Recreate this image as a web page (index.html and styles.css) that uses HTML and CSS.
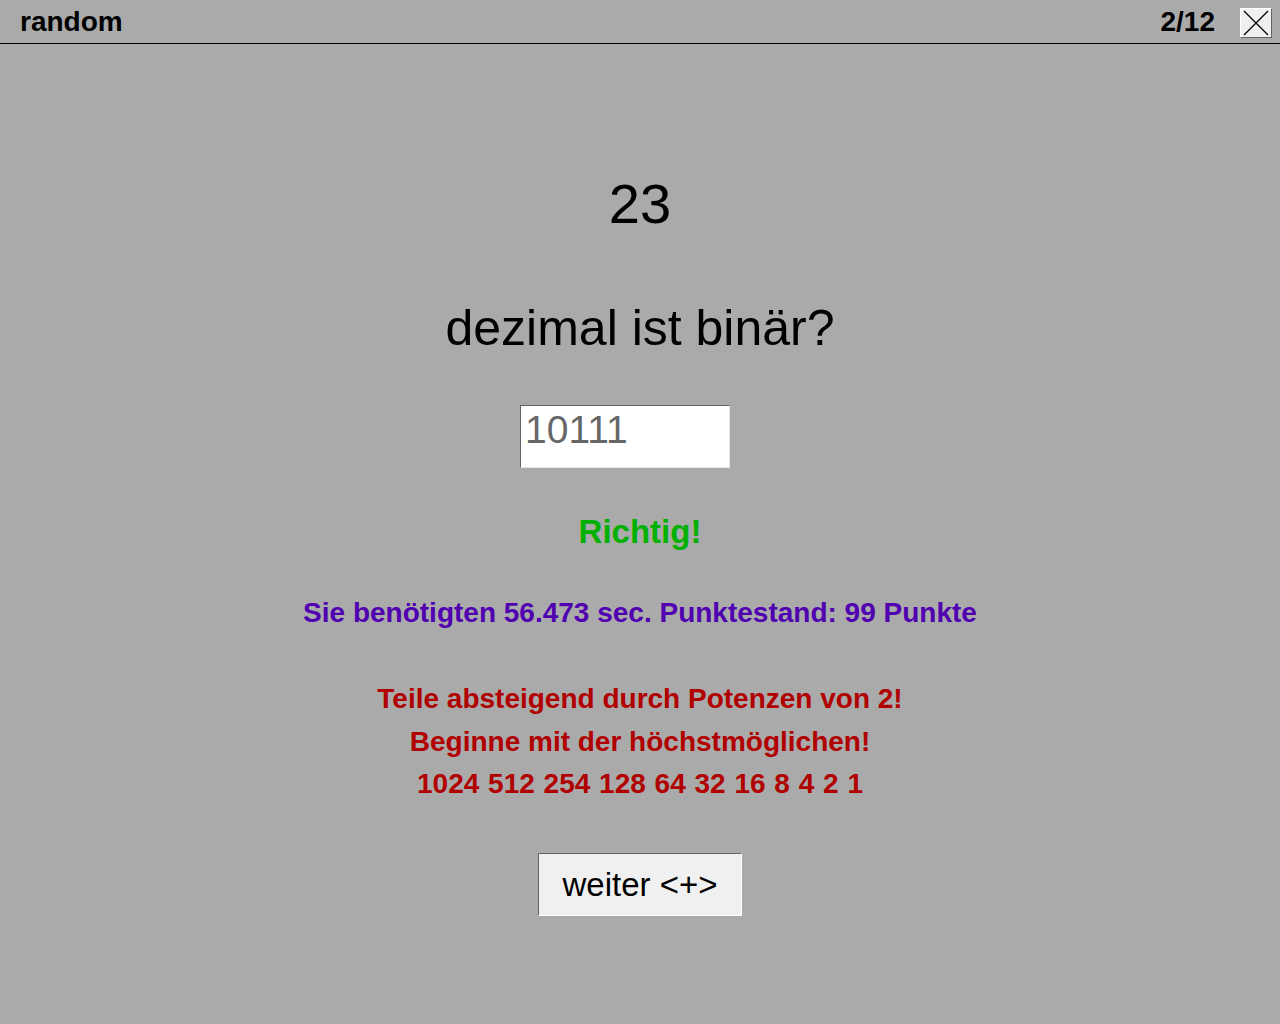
FILE: index.html
```html
<!DOCTYPE html>
<html lang="de">
<head>
<meta charset="utf-8">
<title>random</title>
<link rel="stylesheet" href="styles.css">
</head>
<body>
<header class="topbar">
  <div class="title">random</div>
  <div class="right">
    <div class="counter">2/12</div>
    <button class="close" type="button" aria-label="Schließen">
      <svg width="28" height="26" viewBox="0 0 28 26"><path d="M2 1 L26 25 M26 1 L2 25" stroke="#000" stroke-width="1.3" fill="none"/></svg>
    </button>
  </div>
</header>
<main class="main">
  <div class="number">23</div>
  <div class="question">dezimal ist binär?</div>
  <input class="answer" type="text" value="10111">
  <div class="result">Richtig!</div>
  <div class="score">Sie benötigten 56.473 sec. Punktestand: 99 Punkte</div>
  <div class="hint">
    <div>Teile absteigend durch Potenzen von 2!</div>
    <div>Beginne mit der höchstmöglichen!</div>
    <div class="powers">1024 512 254 128 64 32 16 8 4 2 1</div>
  </div>
  <button class="next" type="button">weiter &lt;+&gt;</button>
</main>
</body>
</html>
```
FILE: styles.css
```css
html, body {
  margin: 0;
  padding: 0;
  background: #aaaaaa;
  font-family: "Liberation Sans", Arial, sans-serif;
  color: #000;
}
body {
  width: 1280px;
  height: 1024px;
  overflow: hidden;
}
.topbar {
  height: 43px;
  border-bottom: 1px solid #000;
  display: flex;
  align-items: center;
  justify-content: space-between;
  padding: 0 8px 0 20px;
}
.title, .counter {
  font-size: 28px;
  font-weight: bold;
  line-height: 40px;
}
.right {
  display: flex;
  align-items: center;
  gap: 25px;
}
.close {
  width: 32px;
  height: 30px;
  margin-top: 3px;
  padding: 0;
  background: #f0f0f0;
  border: 1px solid;
  border-color: #ffffff #646464 #646464 #ffffff;
  display: flex;
  align-items: center;
  justify-content: center;
}
.close svg { display: block; }
.main {
  display: flex;
  flex-direction: column;
  align-items: center;
  padding-top: 128px;
}
.number {
  font-size: 56px;
  line-height: 64px;
}
.question {
  margin-top: 62px;
  font-size: 50px;
  line-height: 60px;
}
.answer {
  margin-top: 47px;
  box-sizing: border-box;
  width: 210px;
  height: 63px;
  margin-left: -30px;
  padding: 0 4px 14px;
  font-family: "Liberation Sans", Arial, sans-serif;
  font-size: 39px;
  color: #666666;
  background: #fff;
  border: 1px solid;
  border-color: #646464 #e3e3e3 #e3e3e3 #646464;
  outline: none;
}
.result {
  margin-top: 44px;
  font-size: 33px;
  line-height: 40px;
  font-weight: bold;
  color: #00b000;
}
.score {
  margin-top: 43px;
  font-size: 28px;
  line-height: 36px;
  font-weight: bold;
  color: #5000b0;
}
.hint {
  margin-top: 47px;
  font-size: 28px;
  line-height: 42.5px;
  font-weight: bold;
  color: #b00000;
  text-align: center;
}
.powers {
  word-spacing: 1px;
}
.next {
  margin-top: 47px;
  width: 204px;
  height: 63px;
  font-family: "Liberation Sans", Arial, sans-serif;
  font-size: 33px;
  color: #000;
  background: #f0f0f0;
  border: 1px solid;
  border-color: #646464 #ffffff #ffffff #646464;
  padding: 2px 0 0;
}
```
